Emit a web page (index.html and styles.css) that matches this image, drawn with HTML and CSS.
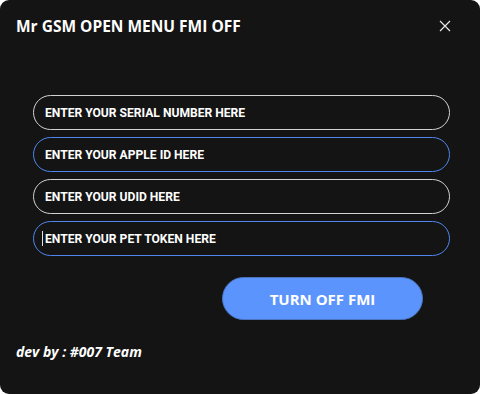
FILE: index.html
```
<!DOCTYPE html>
<html>
<head>
<meta charset="utf-8">
<link rel="stylesheet" href="styles.css">
</head>
<body>
<div class="window">
  <div class="titlebar">
    <span class="title">Mr GSM OPEN MENU FMI OFF</span>
    <svg class="close" width="12" height="12" viewBox="0 0 12 12"><path d="M1 1L11 11M11 1L1 11" stroke="#e8e8e8" stroke-width="1.2"/></svg>
  </div>
  <div class="fields">
    <div class="field light">ENTER YOUR SERIAL NUMBER HERE</div>
    <div class="field blue">ENTER YOUR APPLE ID HERE</div>
    <div class="field light">ENTER YOUR UDID HERE</div>
    <div class="field blue"><span class="caret"></span>ENTER YOUR PET TOKEN HERE</div>
  </div>
  <div class="actions">
    <button class="btn">TURN OFF FMI</button>
  </div>
  <div class="dev">dev by : #007 Team</div>
</div>
</body>
</html>
```
FILE: styles.css
```
html, body { margin: 0; padding: 0; background: #ffffff; }
.window {
  width: 480px; height: 394px; box-sizing: border-box;
  background: #141414; border-radius: 9px; overflow: hidden;
  font-family: "Open Sans", "Noto Sans", sans-serif; color: #fff;
  display: flex; flex-direction: column;
}
.titlebar {
  display: flex; align-items: center; justify-content: space-between;
  padding: 15px 29px 0 16px; height: 22px;
}
.title { font-weight: 700; font-size: 15.5px; letter-spacing: 0; }
.close { display: block; }
.fields {
  margin: 58px 30px 0 33px; display: flex; flex-direction: column; gap: 7px;
}
.field {
  height: 35px; box-sizing: border-box; border-radius: 18px;
  border: 1px solid #d2d2d2; display: flex; align-items: center;
  padding-left: 11px; font-family: "Roboto", "Liberation Sans", sans-serif;
  font-weight: 700; font-size: 12.1px; color: #fff; position: relative;
}
.field.blue { border-color: #4f86ee; }
.caret { width: 1px; height: 15px; background: #e0e0e0; margin-left: -3px; margin-right: 2px; }
.actions { display: flex; justify-content: flex-end; padding-right: 57px; margin-top: 21px; }
.btn {
  width: 201px; height: 43px; border-radius: 22px; border: 1px solid #4a74c0;
  background: #5c94fe; color: #fff; font-family: "Open Sans", "Noto Sans", sans-serif;
  font-weight: 700; font-size: 15px; padding: 0;
}
.dev {
  margin: 22px 0 0 16px; font-style: italic; font-weight: 700; font-size: 14px;
}
```
